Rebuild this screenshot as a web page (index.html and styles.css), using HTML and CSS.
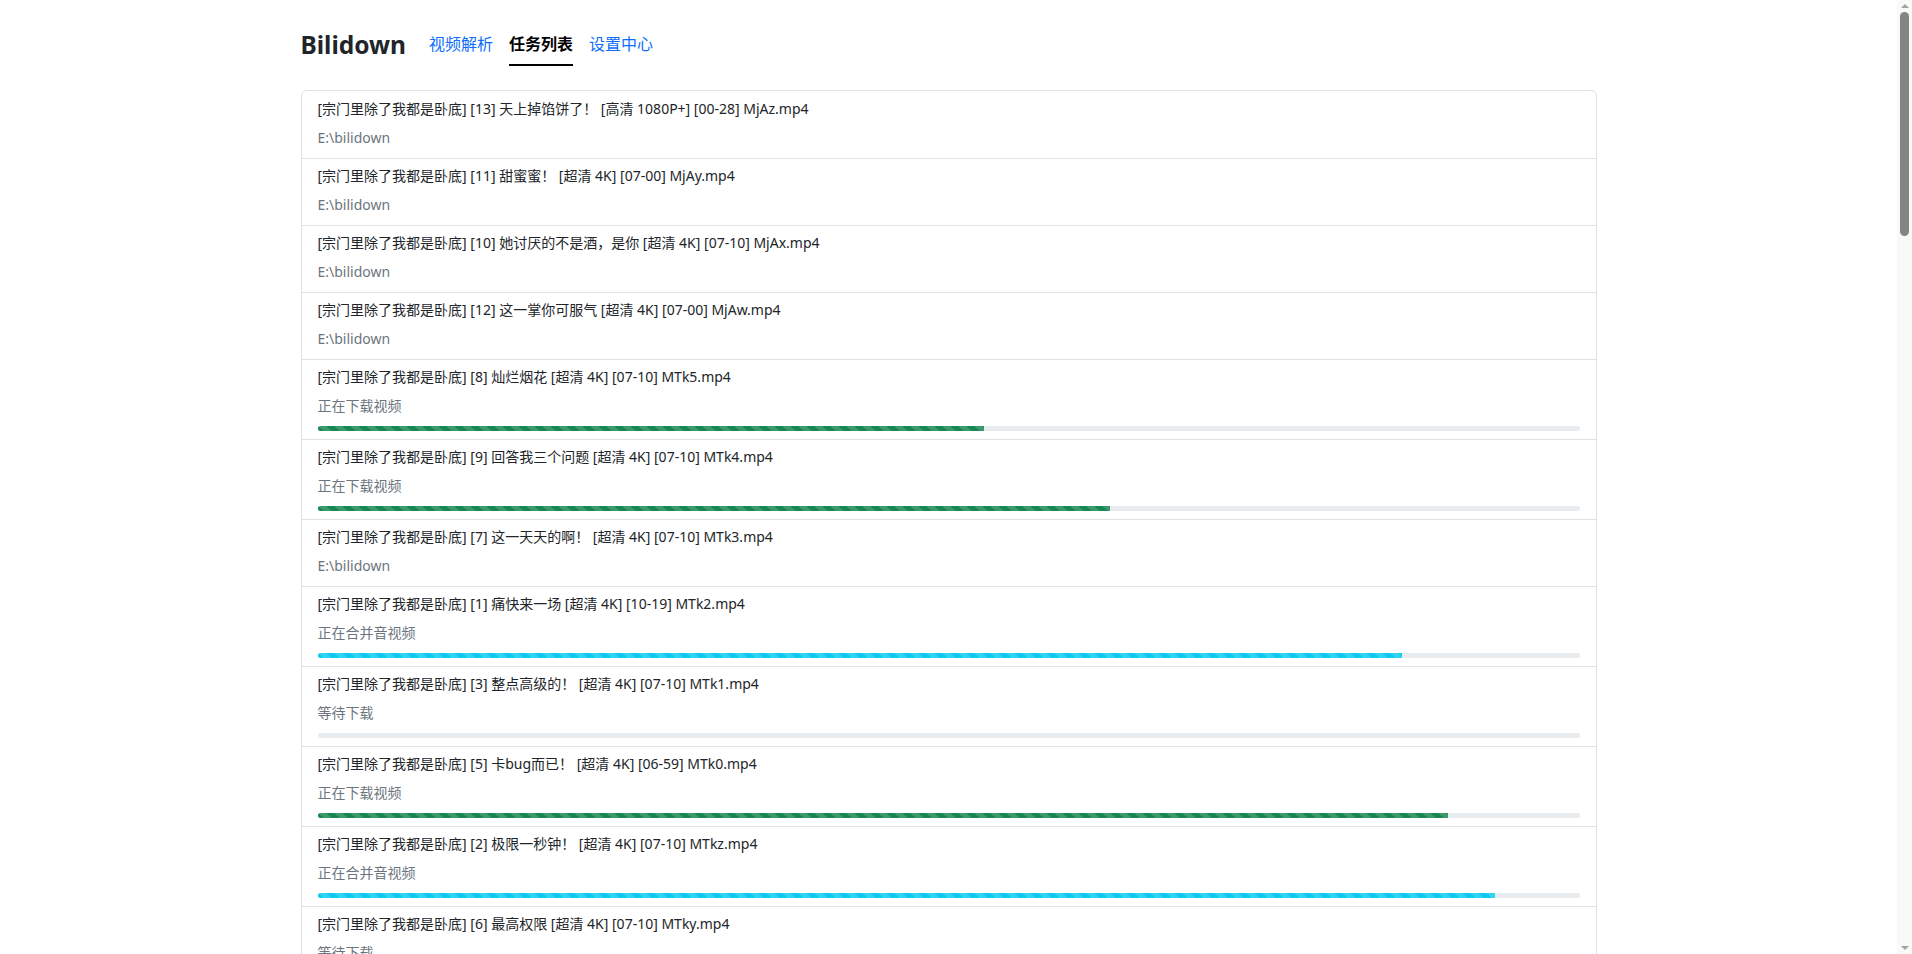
FILE: index.html
```html
<!DOCTYPE html>
<html lang="zh-CN">
<head>
<meta charset="utf-8">
<title>Bilidown</title>
<link rel="stylesheet" href="styles.css">
</head>
<body>
<div class="container">
  <header class="header">
    <div class="brand">Bilidown</div>
    <nav class="nav">
      <a class="nav-link" href="#">视频解析</a>
      <a class="nav-link active" href="#">任务列表</a>
      <a class="nav-link" href="#">设置中心</a>
    </nav>
  </header>
  <ul class="task-list">
    <li class="task"><div class="task-title">[宗门里除了我都是卧底] [13] 天上掉馅饼了！ [高清 1080P+] [00-28] MjAz.mp4</div><div class="task-status">E:\bilidown</div></li>
    <li class="task"><div class="task-title">[宗门里除了我都是卧底] [11] 甜蜜蜜！ [超清 4K] [07-00] MjAy.mp4</div><div class="task-status">E:\bilidown</div></li>
    <li class="task"><div class="task-title">[宗门里除了我都是卧底] [10] 她讨厌的不是酒，是你 [超清 4K] [07-10] MjAx.mp4</div><div class="task-status">E:\bilidown</div></li>
    <li class="task"><div class="task-title">[宗门里除了我都是卧底] [12] 这一掌你可服气 [超清 4K] [07-00] MjAw.mp4</div><div class="task-status">E:\bilidown</div></li>
    <li class="task"><div class="task-title">[宗门里除了我都是卧底] [8] 灿烂烟花 [超清 4K] [07-10] MTk5.mp4</div><div class="task-status">正在下载视频</div><div class="progress"><div class="bar bar-success" style="width:52.8%"></div></div></li>
    <li class="task"><div class="task-title">[宗门里除了我都是卧底] [9] 回答我三个问题 [超清 4K] [07-10] MTk4.mp4</div><div class="task-status">正在下载视频</div><div class="progress"><div class="bar bar-success" style="width:62.8%"></div></div></li>
    <li class="task"><div class="task-title">[宗门里除了我都是卧底] [7] 这一天天的啊！ [超清 4K] [07-10] MTk3.mp4</div><div class="task-status">E:\bilidown</div></li>
    <li class="task"><div class="task-title">[宗门里除了我都是卧底] [1] 痛快来一场 [超清 4K] [10-19] MTk2.mp4</div><div class="task-status">正在合并音视频</div><div class="progress"><div class="bar bar-info" style="width:85.9%"></div></div></li>
    <li class="task"><div class="task-title">[宗门里除了我都是卧底] [3] 整点高级的！ [超清 4K] [07-10] MTk1.mp4</div><div class="task-status">等待下载</div><div class="progress"><div class="bar bar-success" style="width:0%"></div></div></li>
    <li class="task"><div class="task-title">[宗门里除了我都是卧底] [5] 卡bug而已！ [超清 4K] [06-59] MTk0.mp4</div><div class="task-status">正在下载视频</div><div class="progress"><div class="bar bar-success" style="width:89.6%"></div></div></li>
    <li class="task"><div class="task-title">[宗门里除了我都是卧底] [2] 极限一秒钟！ [超清 4K] [07-10] MTkz.mp4</div><div class="task-status">正在合并音视频</div><div class="progress"><div class="bar bar-info" style="width:93.3%"></div></div></li>
    <li class="task"><div class="task-title">[宗门里除了我都是卧底] [6] 最高权限 [超清 4K] [07-10] MTky.mp4</div><div class="task-status">等待下载</div><div class="progress"><div class="bar bar-success" style="width:0%"></div></div></li>
    <li class="task"><div class="task-title">[宗门里除了我都是卧底] [4] 出手吧 [超清 4K] [07-10] MTkx.mp4</div><div class="task-status">等待下载</div><div class="progress"><div class="bar bar-success" style="width:0%"></div></div></li>
    <li class="task"><div class="task-title">[宗门里除了我都是卧底] [14] 来者何人 [超清 4K] [07-10] MjA0.mp4</div><div class="task-status">等待下载</div><div class="progress"><div class="bar bar-success" style="width:0%"></div></div></li>
    <li class="task"><div class="task-title">[宗门里除了我都是卧底] [15] 宗门大比 [超清 4K] [07-10] MjA1.mp4</div><div class="task-status">等待下载</div><div class="progress"><div class="bar bar-success" style="width:0%"></div></div></li>
    <li class="task"><div class="task-title">[宗门里除了我都是卧底] [16] 卧底身份 [超清 4K] [07-10] MjA2.mp4</div><div class="task-status">等待下载</div><div class="progress"><div class="bar bar-success" style="width:0%"></div></div></li>
    <li class="task"><div class="task-title">[宗门里除了我都是卧底] [17] 真相大白 [超清 4K] [07-10] MjA3.mp4</div><div class="task-status">等待下载</div><div class="progress"><div class="bar bar-success" style="width:0%"></div></div></li>
    <li class="task"><div class="task-title">[宗门里除了我都是卧底] [18] 师尊出关 [超清 4K] [07-10] MjA4.mp4</div><div class="task-status">等待下载</div><div class="progress"><div class="bar bar-success" style="width:0%"></div></div></li>
    <li class="task"><div class="task-title">[宗门里除了我都是卧底] [19] 魔门来袭 [超清 4K] [07-10] MjA5.mp4</div><div class="task-status">等待下载</div><div class="progress"><div class="bar bar-success" style="width:0%"></div></div></li>
    <li class="task"><div class="task-title">[宗门里除了我都是卧底] [20] 一剑破万法 [超清 4K] [07-10] MjEw.mp4</div><div class="task-status">等待下载</div><div class="progress"><div class="bar bar-success" style="width:0%"></div></div></li>
    <li class="task"><div class="task-title">[宗门里除了我都是卧底] [21] 秘境开启 [超清 4K] [07-10] MjEx.mp4</div><div class="task-status">等待下载</div><div class="progress"><div class="bar bar-success" style="width:0%"></div></div></li>
    <li class="task"><div class="task-title">[宗门里除了我都是卧底] [22] 机缘 [超清 4K] [07-10] MjEy.mp4</div><div class="task-status">等待下载</div><div class="progress"><div class="bar bar-success" style="width:0%"></div></div></li>
    <li class="task"><div class="task-title">[宗门里除了我都是卧底] [23] 突破 [超清 4K] [07-10] MjEz.mp4</div><div class="task-status">等待下载</div><div class="progress"><div class="bar bar-success" style="width:0%"></div></div></li>
    <li class="task"><div class="task-title">[宗门里除了我都是卧底] [24] 同门之谊 [超清 4K] [07-10] MjE0.mp4</div><div class="task-status">等待下载</div><div class="progress"><div class="bar bar-success" style="width:0%"></div></div></li>
    <li class="task"><div class="task-title">[宗门里除了我都是卧底] [25] 风云再起 [超清 4K] [07-10] MjE1.mp4</div><div class="task-status">等待下载</div><div class="progress"><div class="bar bar-success" style="width:0%"></div></div></li>
    <li class="task"><div class="task-title">[宗门里除了我都是卧底] [26] 暗流涌动 [超清 4K] [07-10] MjE2.mp4</div><div class="task-status">等待下载</div><div class="progress"><div class="bar bar-success" style="width:0%"></div></div></li>
    <li class="task"><div class="task-title">[宗门里除了我都是卧底] [27] 掌门令 [超清 4K] [07-10] MjE3.mp4</div><div class="task-status">等待下载</div><div class="progress"><div class="bar bar-success" style="width:0%"></div></div></li>
    <li class="task"><div class="task-title">[宗门里除了我都是卧底] [28] 长老会 [超清 4K] [07-10] MjE4.mp4</div><div class="task-status">等待下载</div><div class="progress"><div class="bar bar-success" style="width:0%"></div></div></li>
    <li class="task"><div class="task-title">[宗门里除了我都是卧底] [29] 下山历练 [超清 4K] [07-10] MjE5.mp4</div><div class="task-status">等待下载</div><div class="progress"><div class="bar bar-success" style="width:0%"></div></div></li>
    <li class="task"><div class="task-title">[宗门里除了我都是卧底] [30] 江湖路远 [超清 4K] [07-10] MjIw.mp4</div><div class="task-status">等待下载</div><div class="progress"><div class="bar bar-success" style="width:0%"></div></div></li>
    <li class="task"><div class="task-title">[宗门里除了我都是卧底] [31] 故人重逢 [超清 4K] [07-10] MjIx.mp4</div><div class="task-status">等待下载</div><div class="progress"><div class="bar bar-success" style="width:0%"></div></div></li>
    <li class="task"><div class="task-title">[宗门里除了我都是卧底] [32] 一念之间 [超清 4K] [07-10] MjIy.mp4</div><div class="task-status">等待下载</div><div class="progress"><div class="bar bar-success" style="width:0%"></div></div></li>
    <li class="task"><div class="task-title">[宗门里除了我都是卧底] [33] 天劫 [超清 4K] [07-10] MjIz.mp4</div><div class="task-status">等待下载</div><div class="progress"><div class="bar bar-success" style="width:0%"></div></div></li>
    <li class="task"><div class="task-title">[宗门里除了我都是卧底] [34] 归来 [超清 4K] [07-10] MjI0.mp4</div><div class="task-status">等待下载</div><div class="progress"><div class="bar bar-success" style="width:0%"></div></div></li>
    <li class="task"><div class="task-title">[宗门里除了我都是卧底] [35] 真正的卧底 [超清 4K] [07-10] MjI1.mp4</div><div class="task-status">等待下载</div><div class="progress"><div class="bar bar-success" style="width:0%"></div></div></li>
    <li class="task"><div class="task-title">[宗门里除了我都是卧底] [36] 终章 [超清 4K] [07-10] MjI2.mp4</div><div class="task-status">等待下载</div><div class="progress"><div class="bar bar-success" style="width:0%"></div></div></li>
    <li class="task"><div class="task-title">[宗门里除了我都是卧底] [37] 番外一 [超清 4K] [07-10] MjI3.mp4</div><div class="task-status">等待下载</div><div class="progress"><div class="bar bar-success" style="width:0%"></div></div></li>
    <li class="task"><div class="task-title">[宗门里除了我都是卧底] [38] 番外二 [超清 4K] [07-10] MjI4.mp4</div><div class="task-status">等待下载</div><div class="progress"><div class="bar bar-success" style="width:0%"></div></div></li>
    <li class="task"><div class="task-title">[宗门里除了我都是卧底] [39] 番外三 [超清 4K] [07-10] MjI5.mp4</div><div class="task-status">等待下载</div><div class="progress"><div class="bar bar-success" style="width:0%"></div></div></li>
    <li class="task"><div class="task-title">[宗门里除了我都是卧底] [40] 番外四 [超清 4K] [07-10] MjMw.mp4</div><div class="task-status">等待下载</div><div class="progress"><div class="bar bar-success" style="width:0%"></div></div></li>
    <li class="task"><div class="task-title">[宗门里除了我都是卧底] [41] 番外五 [超清 4K] [07-10] MjMx.mp4</div><div class="task-status">等待下载</div><div class="progress"><div class="bar bar-success" style="width:0%"></div></div></li>
    <li class="task"><div class="task-title">[宗门里除了我都是卧底] [42] 番外六 [超清 4K] [07-10] MjMy.mp4</div><div class="task-status">等待下载</div><div class="progress"><div class="bar bar-success" style="width:0%"></div></div></li>
    <li class="task"><div class="task-title">[宗门里除了我都是卧底] [43] 番外七 [超清 4K] [07-10] MjMz.mp4</div><div class="task-status">等待下载</div><div class="progress"><div class="bar bar-success" style="width:0%"></div></div></li>
    <li class="task"><div class="task-title">[宗门里除了我都是卧底] [44] 番外八 [超清 4K] [07-10] MjM0.mp4</div><div class="task-status">等待下载</div><div class="progress"><div class="bar bar-success" style="width:0%"></div></div></li>
    <li class="task"><div class="task-title">[宗门里除了我都是卧底] [45] 番外九 [超清 4K] [07-10] MjM1.mp4</div><div class="task-status">等待下载</div><div class="progress"><div class="bar bar-success" style="width:0%"></div></div></li>
    <li class="task"><div class="task-title">[宗门里除了我都是卧底] [46] 番外十 [超清 4K] [07-10] MjM2.mp4</div><div class="task-status">等待下载</div><div class="progress"><div class="bar bar-success" style="width:0%"></div></div></li>
    <li class="task"><div class="task-title">[宗门里除了我都是卧底] [47] 花絮 [超清 4K] [07-10] MjM3.mp4</div><div class="task-status">等待下载</div><div class="progress"><div class="bar bar-success" style="width:0%"></div></div></li>
  </ul>
</div>
<div class="scrollbar" aria-hidden="true">
  <div class="sb-arrow"><span class="tri-up"></span></div>
  <div class="sb-thumb"></div>
  <div class="sb-space"></div>
  <div class="sb-arrow"><span class="tri-down"></span></div>
</div>
</body>
</html>
```

FILE: styles.css
```css
* { box-sizing: border-box; }

html, body {
  margin: 0;
  padding: 0;
  background: #fff;
}

body {
  font-family: "Noto Sans", "Noto Sans CJK SC", sans-serif;
  color: #212529;
  font-size: 14px;
  line-height: 1.5;
  margin-right: 15px;
}

.container {
  max-width: 1320px;
  margin: 0 auto;
  padding: 24px 12px 24px;
}

.header {
  display: flex;
  align-items: center;
  margin-bottom: 24px;
}

.brand {
  font-family: "Noto Sans", "Noto Sans CJK SC", sans-serif;
  font-size: 24.5px;
  font-weight: 700;
  line-height: 1.2;
  color: #212529;
  margin-right: 23px;
}

.nav {
  display: flex;
  gap: 16px;
}

.nav-link {
  display: block;
  padding: 8px 0;
  font-size: 16px;
  line-height: 24px;
  color: #0d6efd;
  text-decoration: none;
  border-bottom: 2px solid transparent;
}

.nav-link.active {
  color: #000;
  font-weight: 700;
  border-bottom-color: #000;
}

.task-list {
  list-style: none;
  margin: 0;
  padding: 0;
  border: 1px solid #dee2e6;
  border-radius: 6px;
}

.task {
  padding: 6px 16px 8px;
  border-top: 1px solid #dee2e6;
}

.task:first-child {
  border-top: 0;
  padding-top: 7px;
}

.task-title {
  line-height: 21px;
}

.task-status {
  margin-top: 8px;
  margin-bottom: 2px;
  line-height: 21px;
  color: #6c757d;
}

.progress {
  margin-top: 10px;
  height: 5px;
  background: #e9ecef;
  border-radius: 6px;
  overflow: hidden;
  display: flex;
}

.bar {
  height: 100%;
  background-image: linear-gradient(45deg,
    rgba(255,255,255,.15) 25%, transparent 25%, transparent 50%,
    rgba(255,255,255,.15) 50%, rgba(255,255,255,.15) 75%, transparent 75%, transparent);
  background-size: 16px 16px;
}

.bar-success { background-color: #198754; }
.bar-info { background-color: #0dcaf0; }

/* fake window scrollbar, overlaying the right edge */
.scrollbar {
  position: fixed;
  top: 0;
  right: 0;
  width: 15px;
  height: 100vh;
  background: #f9f9f9;
  display: flex;
  flex-direction: column;
  align-items: center;
}

.sb-arrow {
  height: 12px;
  width: 100%;
  display: flex;
  align-items: center;
  justify-content: center;
}

.tri-up {
  width: 0;
  height: 0;
  border-left: 4px solid transparent;
  border-right: 4px solid transparent;
  border-bottom: 4px solid #a3a3a3;
}

.tri-down {
  width: 0;
  height: 0;
  border-left: 4px solid transparent;
  border-right: 4px solid transparent;
  border-top: 4px solid #a3a3a3;
}

.sb-thumb {
  width: 9px;
  height: 224px;
  background: #858585;
  border-radius: 5px;
}

.sb-space {
  flex: 1;
}
```
